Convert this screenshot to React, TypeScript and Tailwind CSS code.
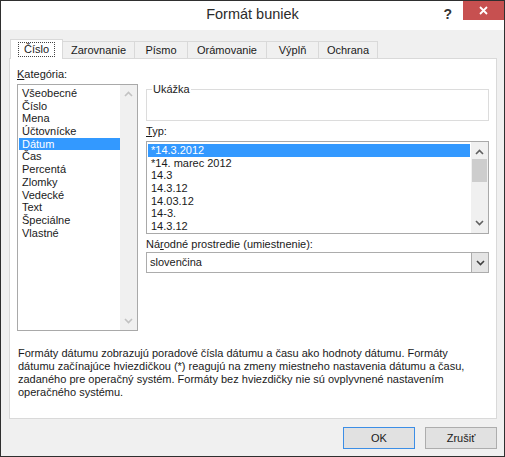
import React from 'react';

const font = { fontFamily: '"Liberation Sans", Arial, sans-serif' };

const categories = [
  'Všeobecné',
  'Číslo',
  'Mena',
  'Účtovnícke',
  'Dátum',
  'Čas',
  'Percentá',
  'Zlomky',
  'Vedecké',
  'Text',
  'Špeciálne',
  'Vlastné',
];

const types = ['*14.3.2012', '*14. marec 2012', '14.3', '14.3.12', '14.03.12', '14-3.', '14.3.12'];

const tabs = ['Zarovnanie', 'Písmo', 'Orámovanie', 'Výplň', 'Ochrana'];
const tabWidths = ['w-[72px]', 'w-[53px]', 'w-[79px]', 'w-[52px]', 'w-[59px]'];

function Chevron({ up, color = '#606060' }: { up?: boolean; color?: string }) {
  return (
    <svg width="9" height="6" viewBox="0 0 9 6" fill="none">
      <path
        d={up ? 'M1 5 L4.5 1.5 L8 5' : 'M1 1 L4.5 4.5 L8 1'}
        stroke={color}
        strokeWidth="1.6"
      />
    </svg>
  );
}

export default function App() {
  return (
    <div
      className="w-[505px] h-[457px] border border-[#2f2f2f] bg-[#f0f0f0] flex flex-col text-[11px] text-[#1a1a1a]"
      style={font}
    >
      {/* Title bar */}
      <div className="relative h-[29px] bg-white flex items-center justify-center shrink-0">
        <span className="text-[14.5px] text-[#2b2b2b] mt-[-2px]">Formát buniek</span>
        <div className="absolute right-0 top-0 flex items-start">
          <span className="text-[14px] font-bold text-[#333] mt-[3px] mr-[11px]">?</span>
          <div className="w-[41px] h-[19px] bg-[#c75050] flex items-center justify-center">
            <svg width="9" height="9" viewBox="0 0 9 9">
              <path d="M1 1 L8 8 M8 1 L1 8" stroke="white" strokeWidth="1.8" />
            </svg>
          </div>
        </div>
      </div>

      {/* Tabs */}
      <div className="flex items-end pl-[9px] pt-[8px] h-[28px] shrink-0">
        <div className="relative z-10 w-[53px] h-[20px] bg-white border border-b-0 border-[#d9d9d9] flex items-center justify-center mb-[-1px]">
          <span className="border border-dotted border-[#444] px-[5px] leading-[12px] pb-[1px]">Číslo</span>
        </div>
        {tabs.map((t, i) => (
          <div
            key={t}
            className={`${tabWidths[i]} h-[17px] bg-[#f0f0f0] border border-b-0 border-l-0 border-[#d9d9d9] flex items-center justify-center pt-[1px]`}
          >
            {t}
          </div>
        ))}
      </div>

      {/* Panel */}
      <div className="ml-[8px] w-[488px] h-[361px] bg-white border border-[#d9d9d9] flex flex-col shrink-0">
        <div className="flex pl-[7px] pt-[9px] gap-[8px]">
          {/* Category column */}
          <div className="flex flex-col w-[121px]">
            <div className="leading-[13px] h-[16px]">
              <span className="underline">K</span>ategória:
            </div>
            <div className="h-[247px] border border-[#a9a9a9] flex">
              <div className="flex-1 flex flex-col pt-[2px] pl-[1px]">
                {categories.map((c) => (
                  <div
                    key={c}
                    className={`h-[12.7px] leading-[12.7px] pl-[3px] ${c === 'Dátum' ? 'bg-[#3399ff] text-white' : ''}`}
                  >
                    {c}
                  </div>
                ))}
              </div>
              <div className="w-[17px] bg-[#f0f0f0] flex flex-col items-center justify-between py-[6px]">
                <Chevron up color="#c2c2c2" />
                <Chevron color="#c2c2c2" />
              </div>
            </div>
          </div>

          {/* Right column */}
          <div className="flex flex-col w-[343px]">
            <fieldset className="h-[38px] border border-[#dcdcdc] mt-[15px] pl-[5px]">
              <legend className="px-[1px] leading-[12px] text-[#222]">Ukážka</legend>
            </fieldset>
            <div className="leading-[13px] mt-[4px] h-[16px]">
              <span className="underline">T</span>yp:
            </div>
            <div className="h-[93px] border border-[#a9a9a9] flex">
              <div className="flex-1 flex flex-col pt-[2px] pl-[1px] pr-[1px]">
                {types.map((t, i) => (
                  <div
                    key={i}
                    className={`h-[12.7px] leading-[12.7px] pl-[3px] ${i === 0 ? 'bg-[#3399ff] text-white' : ''}`}
                  >
                    {t}
                  </div>
                ))}
              </div>
              <div className="w-[17px] bg-[#f0f0f0] flex flex-col items-center py-[7px]">
                <Chevron up />
                <div className="w-[15px] h-[23px] bg-[#cdcdcd] mt-[4px]" />
                <div className="flex-1" />
                <Chevron />
              </div>
            </div>
            <div className="leading-[13px] mt-[4px] h-[14px]">
              Ná<span className="underline">r</span>odné prostredie (umiestnenie):
            </div>
            <div className="h-[21px] border border-[#acacac] flex items-center">
              <span className="flex-1 pl-[3px]">slovenčina</span>
              <div className="w-[17px] h-[19px] bg-[#e5e5e5] border-l border-[#acacac] flex items-center justify-center">
                <Chevron color="#404040" />
              </div>
            </div>
          </div>
        </div>

        <div className="mt-[16px] pl-[8px] leading-[13px] text-[#1a1a1a]">
          <div className="whitespace-nowrap">
            Formáty dátumu zobrazujú poradové čísla dátumu a času ako hodnoty dátumu. Formáty
          </div>
          <div className="whitespace-nowrap">
            dátumu začínajúce hviezdičkou (*) reagujú na zmeny miestneho nastavenia dátumu a času,
          </div>
          <div className="whitespace-nowrap">
            zadaného pre operačný systém. Formáty bez hviezdičky nie sú ovplyvnené nastavením
          </div>
          <div className="whitespace-nowrap">operačného systému.</div>
        </div>
      </div>

      {/* Buttons */}
      <div className="flex justify-end gap-[10px] pr-[7px] pt-[8px]">
        <button className="w-[72px] h-[22px] bg-[#e1e1e1] border border-[#3c8ee6] flex items-center justify-center">
          OK
        </button>
        <button className="w-[72px] h-[22px] bg-[#e1e1e1] border border-[#adadad] flex items-center justify-center">
          Zrušiť
        </button>
      </div>
    </div>
  );
}
